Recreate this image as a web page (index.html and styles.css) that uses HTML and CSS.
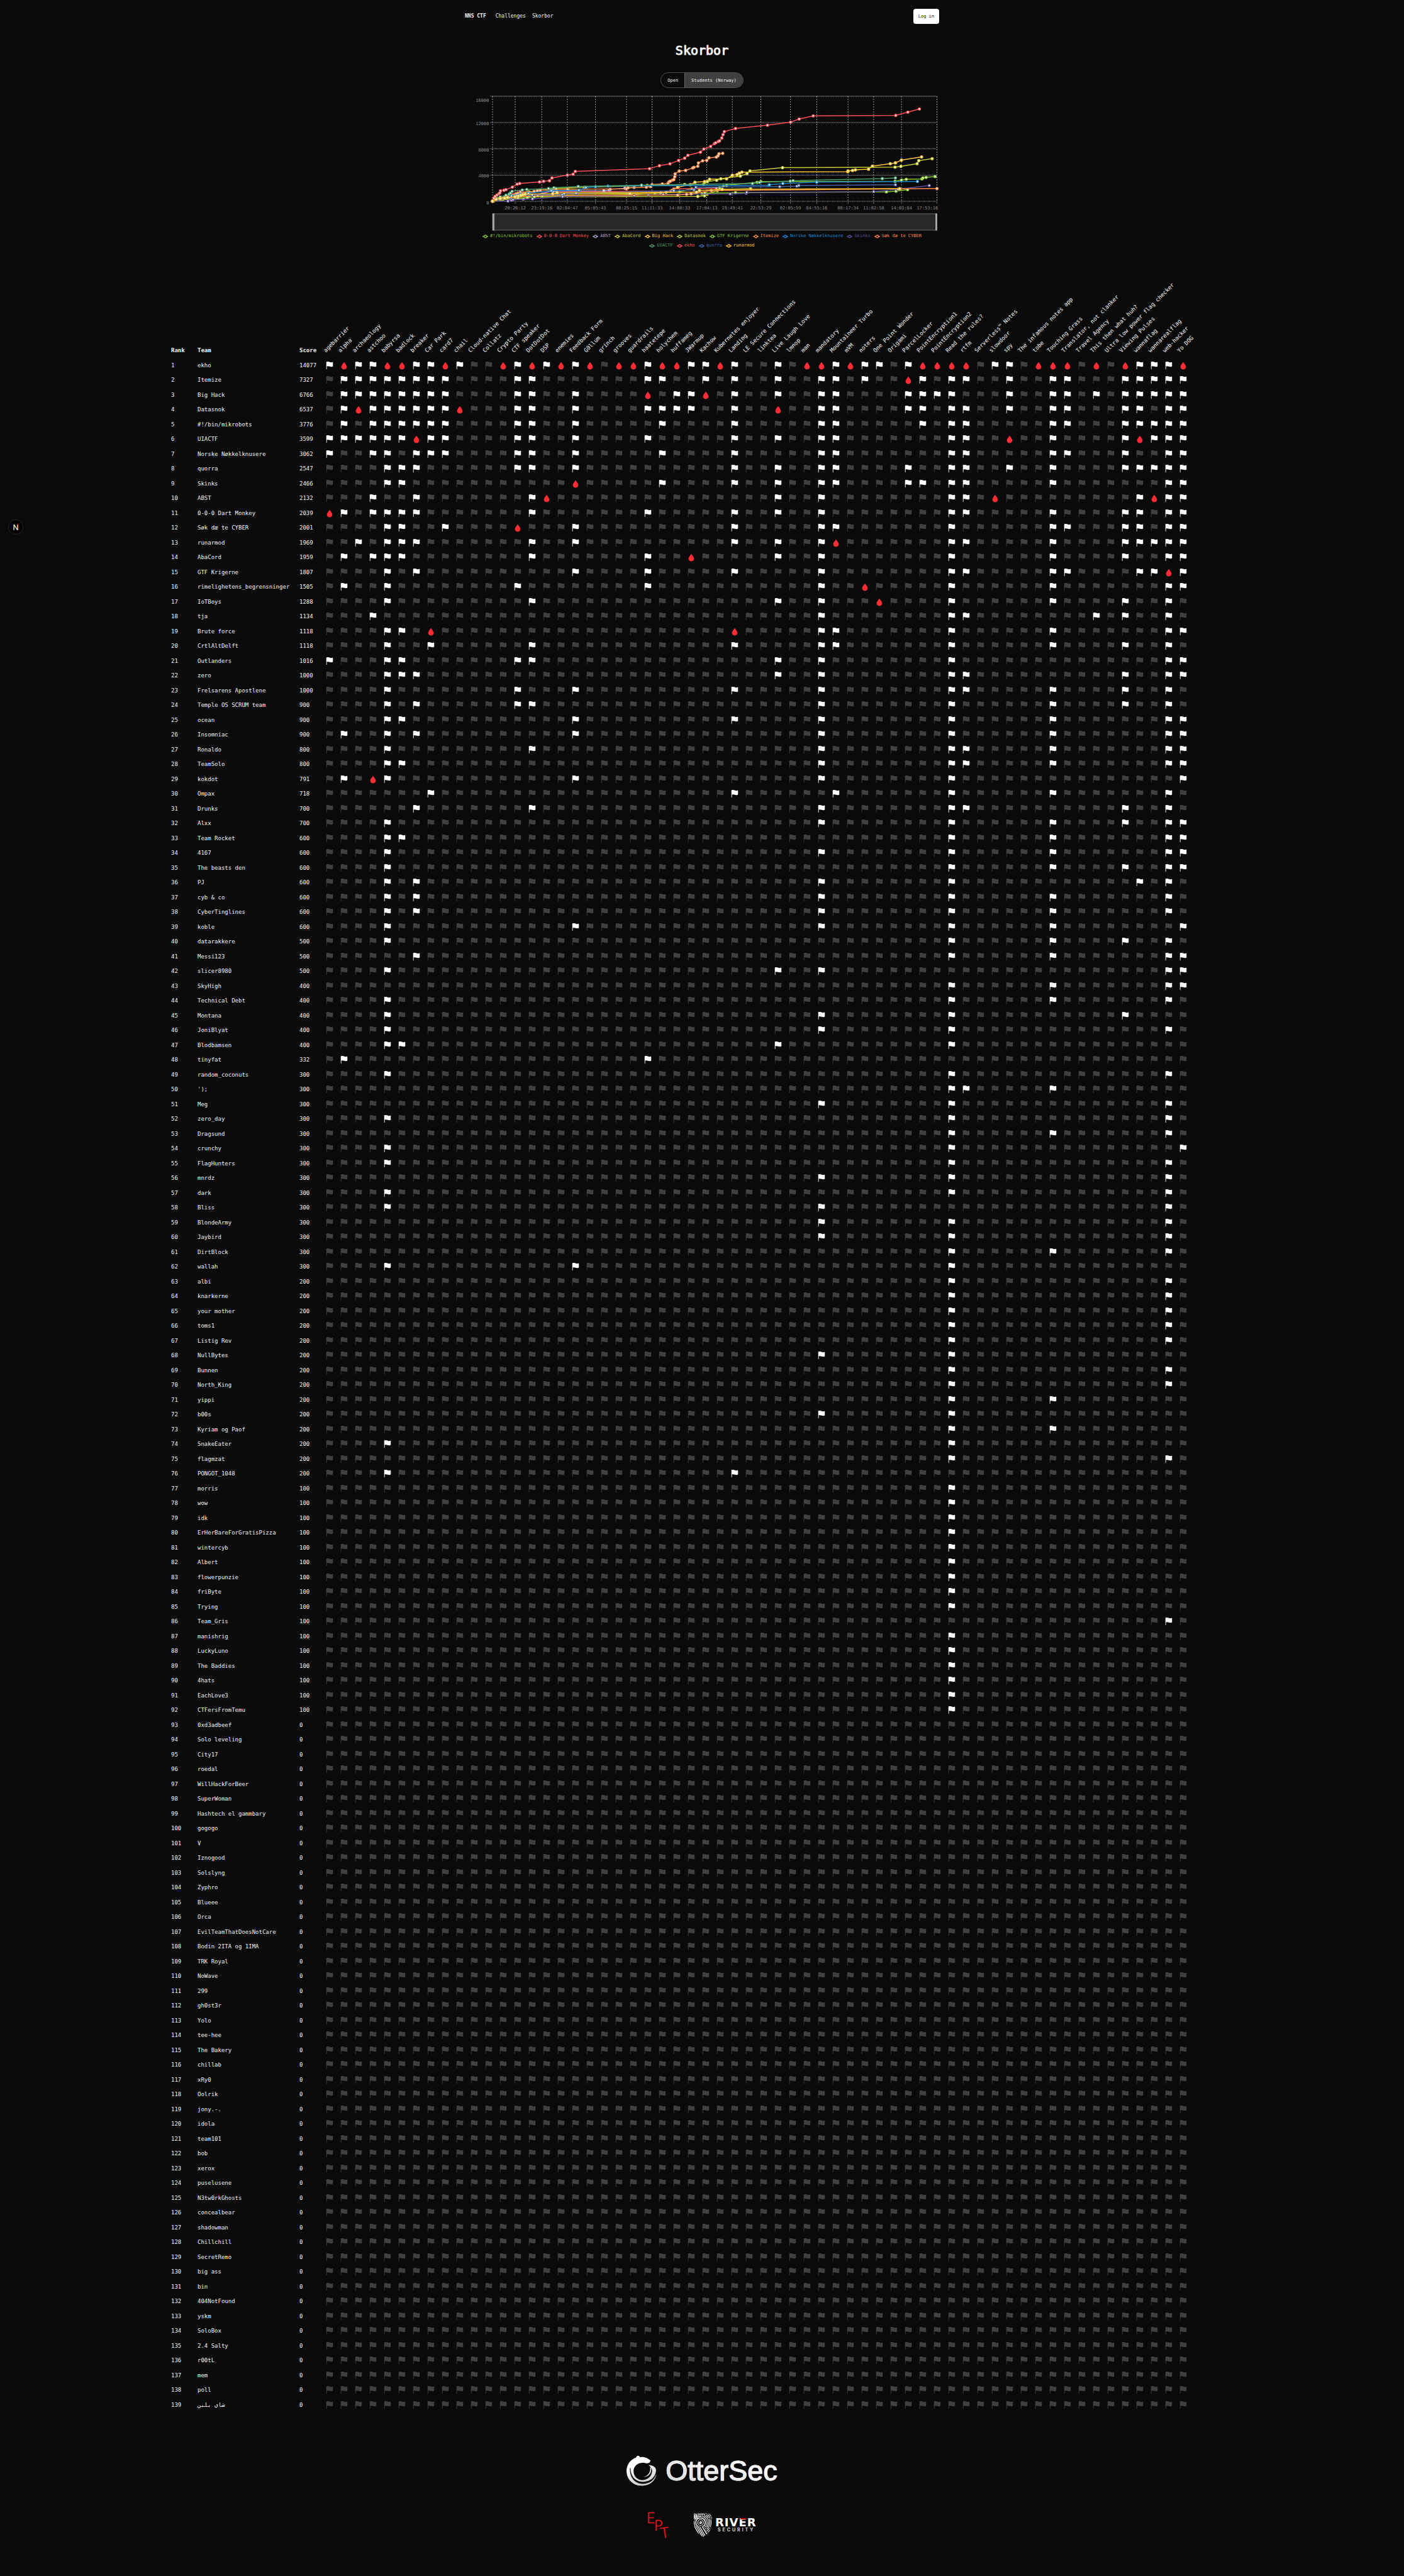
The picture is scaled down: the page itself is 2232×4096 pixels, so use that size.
FILE: index.html
```html
<!DOCTYPE html>
<html lang="en">
<head>
<meta charset="utf-8">
<meta name="viewport" content="width=device-width, initial-scale=1">
<title>Skorbor - NNS CTF</title>
<link rel="stylesheet" href="styles.css">
</head>
<body>
<svg class="sprite" aria-hidden="true">
  <symbol id="flag" viewBox="0 0 512 512"><path d="M80 480a16 16 0 0 1-16-16V68.13A24 24 0 0 1 75.9 47.41C88 40.38 112.38 32 160 32c37.21 0 78.83 14.71 115.55 27.68C305.12 70.13 333.05 80 352 80a183.84 183.84 0 0 0 71-14.5 18 18 0 0 1 25 16.58v219.36a20 20 0 0 1-12 18.31c-8.71 3.81-40.51 16.25-84 16.25-24.14 0-54.38-7.14-86.39-14.71C229.63 312.79 192.43 304 160 304c-36.87 0-55.74 5.58-64 9.11V464a16 16 0 0 1-16 16z"/></symbol>
  <symbol id="drop" viewBox="0 0 512 512"><path d="M256 56C228 125 96 240 96 345C96 430 165 490 256 490S416 430 416 345C416 240 284 125 256 56Z"/></symbol>
</svg>

<header class="site-header">
  <nav class="nav">
    <a class="brand" href="#">NNS CTF</a>
    <a href="#">Challenges</a>
    <a href="#">Skorbor</a>
  </nav>
  <button class="login" type="button">Log in</button>
</header>

<main>
  <section class="overview">
    <h1>Skorbor</h1>
    <div class="divisions">
      <button type="button">Open</button>
      <button class="active" type="button">Students (Norway)</button>
    </div>
    <svg class="chart" id="chart" viewBox="0 0 754 222" role="img" aria-label="Score over time"></svg>
    <ul class="legend" id="legend"></ul>
  </section>

  <section class="board">
    <table class="scores">
      <colgroup><col class="col-rank"><col class="col-team"><col class="col-score"><col class="col-flag" span="60"></colgroup>
      <thead><tr id="head"><th scope="col">Rank</th><th scope="col">Team</th><th scope="col">Score</th></tr></thead>
      <tbody id="rows"></tbody>
    </table>
  </section>
</main>

<footer class="sponsors">
  <a class="ottersec" href="#">
    <svg class="otter" viewBox="128 108 222 226" aria-hidden="true">
      <defs><linearGradient id="silver" x1="0.3" y1="0" x2="0.6" y2="1"><stop offset="0.3" stop-color="#fff"/><stop offset="1" stop-color="#c9c9c9"/></linearGradient></defs>
      <path fill="url(#silver)" d="M305 147C285 130 270 120 240 120L226 121C222 108 203 107 199 124C155 140 128 180 128 224C130 290 180 333 245 332C300 330 342 295 349 243C335 290 295 318 248 318C190 318 150 272 153 203L158 203C156 262 195 303 245 303C312 303 345 260 345 215C342 192 320 180 290 180C312 195 320 215 315 234C308 268 280 290 243 290C205 290 180 262 180 225C180 188 210 163 245 163C262 163 280 168 288 166C297 163 303 155 305 147Z"/>
      <path fill="url(#silver)" d="M302 192C306 228 292 258 252 268C288 270 314 242 309 203Z"/>
    </svg>
    <span class="otter-name">OtterSec</span>
  </a>
  <div class="sponsor-row">
    <a href="#" aria-label="EPT">
      <svg class="ept" viewBox="0 0 38 38">
        <text x="-1" y="16">E</text><text x="11" y="28">P</text><text x="21" y="39" transform="rotate(-8 28 30)">T</text>
      </svg>
    </a>
    <a class="river" href="#">
      <svg class="shield" viewBox="627 533 135 170" aria-hidden="true">
        <defs>
          <clipPath id="shape"><path d="M627 534H757V610C755 650 730 680 693 703C650 675 630 650 627 610Z"/></clipPath>
          <clipPath id="upper"><path d="M627 533H762V703H735L697 628H627Z"/></clipPath>
        </defs>
        <g clip-path="url(#shape)" fill="none" stroke="#fff">
          <g clip-path="url(#upper)">
            <circle cx="675" cy="600" r="20" stroke-width="5"/>
            <circle cx="675" cy="600" r="34" stroke-width="7" stroke-dasharray="150 12"/>
            <circle cx="675" cy="600" r="46" stroke-width="5" stroke-dasharray="60 5 90 6"/>
            <circle cx="675" cy="600" r="56" stroke-width="5" stroke-dasharray="40 5 70 6"/>
            <circle cx="675" cy="600" r="66" stroke-width="5" stroke-dasharray="55 6 30 5"/>
            <circle cx="675" cy="600" r="76" stroke-width="5" stroke-dasharray="35 6"/>
            <circle cx="675" cy="600" r="87" stroke-width="5" stroke-dasharray="22 6"/>
            <path d="M627 547H660M627 557H680M627 568H680" stroke-width="5"/>
          </g>
          <circle cx="675" cy="600" r="10" fill="#fff" stroke="none"/>
          <circle cx="671" cy="597" r="4" fill="#0a0a0a" stroke="none"/>
          <path d="M632 628L690 728M645 628L703 728M657 628L715 728M669 628L720 715M686 628L722 686" stroke-width="6"/>
        </g>
      </svg>
      <svg class="river-name" viewBox="0 0 66 22">
        <text class="river-word" x="0" y="13">RIVER</text>
        <path d="M41 0H49V2H39Z" fill="#d00000"/>
        <text class="river-sub" x="4" y="21">SECURITY</text>
      </svg>
    </a>
  </div>
</footer>

<button class="dev-badge" type="button" aria-label="Developer tools">N</button>
<script src="board.js"></script>
</body>
</html>
```
FILE: styles.css
```css
* { box-sizing: border-box; }

body {
  margin: 0;
  position: relative;
  background: #0a0a0a;
  color: #f5f5f5;
  font-family: "DejaVu Sans Mono", "Liberation Mono", monospace;
  font-size: 9px;
  line-height: 12px;
  overflow-x: hidden;
}

a { color: inherit; text-decoration: none; }
button { font: inherit; color: inherit; margin: 0; cursor: pointer; }
.sprite { display: none; }

.site-header,
.overview {
  width: 100%;
  max-width: 754px;
  margin: 0 auto;
}

.site-header {
  display: flex;
  align-items: center;
  justify-content: space-between;
  padding: 14px 0;
}

.nav { display: flex; gap: 10px; font-size: 8px; }
.brand { font-weight: bold; margin-right: 5px; }

.login {
  height: 24px;
  padding: 0 8px;
  border: 0;
  border-radius: 4px;
  background: #fff;
  color: #0a0a0a;
  font-size: 7px;
}

.overview {
  display: flex;
  flex-direction: column;
  align-items: center;
}

h1 {
  margin: 16px 0 23px;
  font-size: 20px;
  line-height: 24px;
  font-weight: normal;
  -webkit-text-stroke: 1px currentColor;
}

.divisions {
  display: flex;
  height: 25px;
  margin-bottom: 7px;
  border: 1px solid #525252;
  border-radius: 13px;
  overflow: hidden;
}

.divisions button {
  border: 0;
  padding: 0 10px;
  background: transparent;
  font-size: 7px;
}

.divisions .active { background: #404040; border-left: 1px solid #6a6a6a; }

.chart { display: block; width: 100%; height: auto; overflow: visible; }
.chart text { font-size: 7px; fill: #8a8a8a; }
.chart .grid-x { stroke: #c4c4c4; stroke-dasharray: 2 2; stroke-width: 0.8; }
.chart .grid-y { stroke: #8c8c8c; stroke-dasharray: 1 1; stroke-width: 1.3; }
.chart .tick { stroke: #666; }
.chart polyline { fill: none; stroke-width: 1.5; }
.chart circle { fill: #fff; stroke-width: 1.3; }
.brush { fill: #282828; stroke: #666; }
.brush-handle { fill: #a3a3a3; }

.legend {
  display: flex;
  flex-wrap: wrap;
  justify-content: center;
  gap: 2px 6px;
  margin: 0;
  padding: 0 10px;
  list-style: none;
  font-size: 7px;
  line-height: 13px;
}

.legend li { display: flex; align-items: center; gap: 3px; }
.legend svg { width: 9px; height: 6px; fill: none; stroke: currentColor; stroke-width: 1.3; }

.board {
  width: max-content;
  margin: 148px auto 0;
  padding-right: 73px;
}

.scores {
  width: 1625px;
  table-layout: fixed;
  border-collapse: collapse;
}

.col-rank { width: 42px; }
.col-team { width: 162px; }
.col-score { width: 41px; }
.col-flag { width: 23px; }

.scores tr { height: 23px; }
.scores tr:nth-child(even), .scores thead tr { height: 24px; }
.scores th, .scores td { padding: 0 0 0 5px; text-align: left; white-space: nowrap; }
.scores .flag { padding: 0; }
.scores .challenge { padding: 0; font-weight: normal; }

.challenge span {
  display: block;
  width: 12px;
  margin-left: 8px;
  transform: rotate(-45deg);
  transform-origin: 0 100%;
}

.flag svg { display: block; width: 14px; height: 14px; margin: 0 auto; fill: #404040; }
.flag .solved { fill: #fff; }
.flag .first { fill: #fb2c36; }

.sponsors {
  display: flex;
  flex-direction: column;
  align-items: center;
  gap: 43px;
  padding: 69px 0 62px;
}

.ottersec { display: flex; align-items: center; gap: 14px; height: 49px; }
.otter { width: 48px; height: 49px; }

.otter-name {
  font-family: "Liberation Sans", Arial, sans-serif;
  font-size: 45px;
  line-height: 48px;
  color: transparent;
  background: linear-gradient(15deg, #cfcfcf, #fff 70%);
  background-clip: text;
  -webkit-background-clip: text;
  -webkit-text-stroke: 1px #ececec;
}

.sponsor-row { display: flex; align-items: center; gap: 36px; height: 38px; }
.ept { display: block; width: 38px; height: 38px; overflow: visible; }
.ept text { font: 300 23px Lato, sans-serif; fill: #f01820; stroke: #f01820; stroke-width: 0.5; }
.river { display: flex; align-items: center; gap: 4px; }
.shield { width: 30px; height: 38px; }
.river-name { width: 66px; height: 22px; overflow: visible; }
.river-word { font: bold 18px "DejaVu Sans", sans-serif; letter-spacing: 1px; fill: #fff; }
.river-sub { font: 600 7px Inter, sans-serif; letter-spacing: 3px; fill: #e5e5e5; }

.dev-badge {
  position: absolute;
  left: 13px;
  top: 826px;
  width: 24px;
  height: 24px;
  padding: 0;
  border: 1px solid #2a2a2a;
  border-radius: 50%;
  background: #000;
  color: #fff;
  font: 12px Inter, sans-serif;
}
```
FILE: board.js
```js
const challenges = ["agebarrier", "alpha", "archaeology", "astchoo", "babyrsa", "badlock", "breaker", "Car Park", "card7", "chail",
  "Cloud-native Chat", "Collatz", "Crypto Party", "CTF speaker", "DotDotDot", "DSP", "enemies", "Feedback Form", "G0llum", "grinch",
  "grooves", "guardrails", "haatetepe", "holychem", "huffameg", "JWarmup", "Kachow", "Kubernetes enjoyer", "Landing", "LE Secure Connections",
  "linktea", "Live Laugh Love", "lmnop", "man", "mandatory", "Mountaineer Turbo", "mVM", "noters", "One Point Wonder", "Origami",
  "ParcelLocker", "PointEncryption1", "PointEncryption2", "Read the rules?", "rtfm", "Serverless™ Notes", "slowdoor", "spy", "The infamous notes app", "tobe",
  "Touching Grass", "Translator, not clanker", "Travel Agency", "This then what huh?", "Ultra low power flag checker", "Viewing Pulses", "wannaflag", "wannarealflag", "web-hacker", "Yo DOG"];

// team | score | solved challenge numbers, "b" marks a first blood
const teams = `ekho|14077|1 2b 3 4 5b 6b 7 8 9b 10 13b 14 15b 16 17b 18 19b 21b 22b 23 24b 25b 26 27 28b 29 32 34b 35b 36 37b 38 39 41 42b 43b 44b 45b 47 48 50b 51b 52b 54b 56b 57 58 59 60b
Itemize|7327|2 3 4 5 6 7 8 9 14 15 23 24 27 29 32 35 36 38 41b 42 44 45 48 51 52 56 57 58 59 60
Big Hack|6766|2 3 4 5 6 7 8 9 14 15 18 23b 25 26 27b 29 32 35 36 41 42 43 44 48 51 52 54 56 57 58 59 60
Datasnok|6537|2 3b 4 5 6 7 8 9 10b 14 15 18 23 24 25 26 29 32b 35 36 41 42 44 45 48 51 52 56 57 59 60
#!/bin/mikrobots|3776|2 4 5 6 7 8 9 14 15 18 24 29 35 36 42 44 45 51 52 56 57 58 59 60
UIACTF|3599|1 2 3 4 5 6 7b 8 9 14 15 18 23 29 32 35 36 44 45 48b 51 56 57b 58 59 60
Norske Nøkkelknusere|3062|1 4 5 7 8 9 14 15 18 24 29 35 36 44 45 51 52 56 59 60
quorra|2547|5 6 7 14 15 18 29 32 35 36 41 44 45 48 51 56 57 58 59 60
Skinks|2466|5 6 18b 24 29 32 35 36 41 42 44 45 51 59 60
ABST|2132|4 7 15 16b 32 35 44 45 47b 57 58b 59 60
0-0-0 Dart Monkey|2039|1b 2 4 5 6 7 15 23 29 32 35 44 45 51 56 57 59 60
Søk dæ te CYBER|2001|5 6 9 14b 18 29 35 36 44 51 52 56 57 59 60
runarmod|1969|3 5 6 7 15 18 29 32 35 36b 44 45 51 56 57 58 59 60
AbaCord|1959|2 4 5 6 15 23 26b 32 35 44 51 56 59 60
GTF Krigerne|1807|5 7 18 23 29 35 44 45 51 52 57 58 59b 60
rimelighetens_begrensninger|1505|2 5 14 23 35 38b 44 51 59 60
IoTBoys|1288|5 15 32 35 39b 44 51 56 59
tja|1134|4 35 44 45 54 56 59
Brute force|1118|5 6 8b 29b 35 36 44 51 59 60
CrtlAltDelft|1118|5 8 15 29 35 36 44 51 56 59
Outlanders|1016|1 5 6 14 15 32 35 44 59 60
zero|1000|5 6 7 32 35 44 45 56 59 60
Frelsarens Apostlene|1000|5 14 18 29 35 44 45 51 56 59
Temple OS SCRUM team|900|5 7 14 15 35 44 51 56 59
ocean|900|5 6 18 29 35 44 51 59 60
Insomniac|900|2 5 7 18 35 44 51 59 60
Ronaldo|800|5 15 35 44 45 51 59 60
TeamSolo|800|5 6 35 44 45 51 59 60
kokdot|791|2 4b 5 18 35 44 60
Ompax|718|8 29 36 44 51 59
Drunks|700|7 15 35 44 45 56 59
Alxx|700|5 35 44 51 56 59 60
Team Rocket|600|5 6 44 51 59 60
4167|600|5 35 44 51 59 60
The beasts den|600|5 44 51 56 59 60
PJ|600|5 7 35 44 57 59
cyb & co|600|5 7 35 44 51 59
CyberTinglines|600|5 7 35 44 51 59
koble|600|5 18 35 44 51 60
datarakkere|500|5 44 51 56 59
Messi123|500|7 44 51 59 60
slicer8980|500|5 32 35 59 60
SkyHigh|400|44 51 59 60
Technical Debt|400|5 44 51 59
Montana|400|5 35 44 56
JoniBlyat|400|5 35 44 59
Blodbamsen|400|5 6 32 44
tinyfat|332|2 23
random_coconuts|300|5 44 59
');|300|44 45 51
Meg|300|35 44 59
zero_day|300|5 44 59
Dragsund|300|44 51 59
crunchy|300|5 44 60
FlagHunters|300|5 44 59
mnrdz|300|35 44 59
dark|300|5 44 59
Bliss|300|5 35 59
BlondeArmy|300|35 44 59
Jaybird|300|35 44 59
DirtBlock|300|44 51 59
wallah|300|5 18 44
albi|200|44 59
knarkerne|200|44 59
your mother|200|44 59
toms1|200|44 59
Listig Rev|200|44 59
NullBytes|200|35 44
Bunnen|200|44 59
North_King|200|44 59
yippi|200|44 51
b00s|200|35 44
Kyriam og Paof|200|44 51
SnakeEater|200|5 44
flagmzat|200|44 59
PONGOT_1048|200|5 29
morris|100|44
wow|100|44
idk|100|44
ErHerBareForGratisPizza|100|44
wintercyb|100|44
Albert|100|44
flowerpunzie|100|44
friByte|100|44
Trying|100|44
Team_Gris|100|59
manishrig|100|44
LuckyLuno|100|44
The Baddies|100|44
4hats|100|44
EachLove3|100|44
CTFersFromTemu|100|44
0xd3adbeef
Solo leveling
City17
roedal
WillHackForBeer
SuperWoman
Hashtech el gammbary
gogogo
V
Iznogood
Solslyng
Zyphro
Blueee
Orca
EvilTeamThatDoesNotCare
Bodin 2ITA og 1IMA
TRK Royal
NoWave
299
gh0st3r
Yolo
tee-hee
The Bakery
chillab
xRy0
Oolrik
jony.-.
idola
team101
bob
xerox
puselusene
N3tw0rkGhosts
concealbear
shadowman
Chillchill
SecretRemo
big ass
bin
404NotFound
yskm
SoloBox
2.4 Salty
r00tL
mem
poll
شاي بلبن`.split("\n").map(line => line.split("|"));

const head = document.getElementById("head");
challenges.forEach(name => {
  const th = document.createElement("th");
  th.scope = "col";
  th.className = "challenge";
  const label = document.createElement("span");
  label.textContent = name;
  th.append(label);
  head.append(th);
});

const icon = state => {
  if (state === "b") return '<svg class="first"><use href="#drop"/></svg>';
  return `<svg${state ? ' class="solved"' : ""}><use href="#flag"/></svg>`;
};

const rows = document.getElementById("rows");
teams.forEach(([name, score = "0", solved = ""], i) => {
  const states = {};
  solved.split(" ").forEach(s => { states[parseInt(s)] = s.endsWith("b") ? "b" : "f"; });
  const tr = document.createElement("tr");
  tr.innerHTML = `<td>${i + 1}</td><td></td><td>${score}</td>` +
    challenges.map((_, c) => `<td class="flag">${icon(states[c + 1])}</td>`).join("");
  tr.children[1].textContent = name;
  rows.append(tr);
});

// Plot area: 1390 time units wide, 627 score units (16000 points) high
const LEFT = 44, TOP = 6, XS = 0.5083, YS = 0.2667;
const px = x => (LEFT + (x - 126) * XS).toFixed(1);
const py = y => (TOP + (y - 575) * YS).toFixed(1);

const green = "#86c925", red = "#ff4d57", lilac = "#b0a0cc", olive = "#c4cc2e", yellow = "#ffc42e",
  orange = "#ff8a47", blue = "#1a85d0", violet = "#5f4a94", teal = "#4a9c6b", navy = "#4463a8";

const series = [
  ["#!/bin/mikrobots", green, "126,1200 140,1190 165,1180 190,1170 240,1162 328,1159 634,1153 711,1145 749,1127 836,1120 848,1110 858,1105 953,1089 965,1084 1385,1082 1405,1075 1420,1070 1469,1068 1472,1062 1482,1059 1510,1054"],
  ["0-0-0 Dart Monkey", red, "126,1200 133,1190 140,1185 165,1178 175,1172 188,1163 194,1160 205,1152 213,1145 683,1140 688,1136 693,1127 826,1123"],
  ["ABST", lilac, "126,1200 150,1192 185,1189 222,1187 240,1170 316,1140 326,1140 474,1138 491,1134 494,1130 540,1124 569,1119"],
  ["AbaCord", olive, "126,1200 150,1190 183,1186 205,1183 235,1179 256,1175 768,1172 789,1168 797,1159 829,1137 844,1130 933,1126"],
  ["Big Hack", yellow, "126,1200 134,1188 150,1182 200,1170 228,1159 555,1157 652,1151 669,1147 705,1117 745,1103 759,1088 789,1084 805,1070 858,1067 876,1046 891,1042 898,1034 906,1028 1237,1025 1238,1021 1252,1018 1261,1014 1302,1010 1314,992 1370,977 1386,972 1405,956 1468,937"],
  ["Datasnok", olive, "126,1200 140,1184 168,1176 205,1155 240,1145 324,1125 414,1118 610,1107 727,1101 744,1103 786,1100 798,1084 827,1076 840,1067 901,1051 922,1036 931,1020 1033,1001 1385,998 1403,993 1454,977 1459,959 1501,947"],
  ["GTF Krigerne", green, "130,1199 137,1190 158,1190 183,1188 205,1183 235,1179 256,1175 281,1171 781,1157 790,1152 886,1150 1358,1145 1388,1141 1424,1132"],
  ["Itemize", orange, "126,1200 135,1188 150,1182 165,1174 200,1158 240,1149 256,1142 266,1138 275,1135 361,1130 545,1127 550,1121 607,1117 620,1113 625,1102 657,1098 675,1094 678,1085 682,1081 689,1075 693,1072 696,1055 697,1038 710,1021 730,1017 752,1003 756,999 768,992 770,973 783,960 796,957 803,942 826,938 831,930 834,918 846,915"],
  ["Norske Nøkkelknusere", blue, "126,1200 160,1182 185,1170 213,1160 238,1153 310,1138 396,1136 418,1119 448,1114 487,1110 990,1106 992,1103 1034,1095 1140,1087 1455,1083"],
  ["Skinks", violet, "126,1200 174,1200 185,1195 190,1192 251,1187 345,1173 569,1167 613,1164 660,1160 869,1157 919,1153 921,1148 1318,1144 1393,1130 1492,1107"],
  ["Søk dæ te CYBER", orange, "126,1200 160,1184 200,1175 267,1167 705,1164 733,1160 747,1157 810,1137 1399,1127 1516,1125"],
  ["UIACTF", teal, "126,1200 138,1184 150,1175 168,1165 178,1158 182,1152 187,1142 219,1134 233,1131 301,1125 318,1121 394,1113 592,1105 939,1095 961,1089 1057,1081 1066,1078 1345,1066 1386,1062"],
  ["ekho", red, "126,1200 130,1182 134,1172 140,1164 146,1156 149,1151 151,1139 162,1135 168,1132 188,1117 203,1099 211,1095 273,1086 286,1082 304,1079 312,1062 360,1045 378,1040 385,1023 617,1007 648,989 681,978 708,958 727,944 737,927 776,909 787,890 808,874 820,857 824,853 832,845 836,841 843,824 847,804 851,786 886,767 986,748 1058,730 1085,711 1129,692 1387,689 1425,670 1461,651"],
  ["quorra", navy, "126,1200 178,1180 200,1168 250,1164 344,1162 350,1157 387,1153 693,1138 756,1134 762,1118 1024,1114 1078,1111 1084,1107 1386,1103"],
  ["runarmod", yellow, "126,1200 137,1190 150,1184 164,1182 173,1179 196,1175 207,1170 215,1167 221,1163 228,1159 314,1156 328,1151 764,1147 773,1137 844,1130 1399,1126"]
];

const times = [[197, "20:26:12"], [280, "23:19:16"], [360, "02:04:47"], [448, "05:05:43"], [545, "08:25:15"], [625, "11:11:33"], [711, "14:08:33"],
  [796, "17:04:13"], [876, "19:49:41"], [965, "22:53:29"], [1058, "02:05:59"], [1140, "04:55:16"], [1238, "08:17:34"], [1318, "11:02:58"], [1405, "14:03:04"], [1516, "17:53:16"]];

let svg = "";
[[575, 16000, 597], [732, 12000, 737], [889, 8000, 893], [1046, 4000, 1049], [1202, 0, 1207]].forEach(([y, value, labelY]) => {
  svg += `<line class="grid-y" x1="${px(126)}" x2="${px(1516)}" y1="${py(y)}" y2="${py(y)}"/>`;
  svg += `<line class="tick" x1="${px(118)}" x2="${px(126)}" y1="${py(y)}" y2="${py(y)}"/>`;
  svg += `<text x="${px(115)}" y="${+py(labelY) + 3}" text-anchor="end">${value}</text>`;
});
svg += `<line class="grid-x" x1="${px(126)}" x2="${px(126)}" y1="${py(575)}" y2="${py(1202)}"/>`;
times.forEach(([x, label]) => {
  const last = x === 1516;
  svg += `<line class="grid-x" x1="${px(x)}" x2="${px(x)}" y1="${py(575)}" y2="${py(1202)}"/>`;
  svg += `<line class="tick" x1="${px(x)}" x2="${px(x)}" y1="${py(1202)}" y2="${py(1217)}"/>`;
  svg += `<text x="${px(last ? 1519 : x)}" y="${+py(1239) + 3}" text-anchor="${last ? "end" : "middle"}">${label}</text>`;
});
series.forEach(([, color, points]) => {
  const pts = points.split(" ").map(p => p.split(",").map(Number)).map(([x, y]) => [px(x), py(y)]);
  svg += `<polyline stroke="${color}" points="${pts.join(" ")}"/>`;
  svg += pts.map(([x, y]) => `<circle stroke="${color}" cx="${x}" cy="${y}" r="1.9"/>`).join("");
});
svg += `<rect class="brush" x="${px(126)}" y="${py(1276)}" width="706" height="26"/>`;
svg += `<rect class="brush-handle" x="${px(126)}" y="${py(1274)}" width="3" height="27"/>`;
svg += `<rect class="brush-handle" x="${px(1511)}" y="${py(1274)}" width="3" height="27"/>`;
document.getElementById("chart").innerHTML = svg;

document.getElementById("legend").innerHTML = series.map(([name, color]) =>
  `<li style="color:${color}"><svg viewBox="0 0 9 6"><path d="M0 3H2.5M6.5 3H9"/><circle cx="4.5" cy="3" r="2"/></svg>${name}</li>`).join("");
```
